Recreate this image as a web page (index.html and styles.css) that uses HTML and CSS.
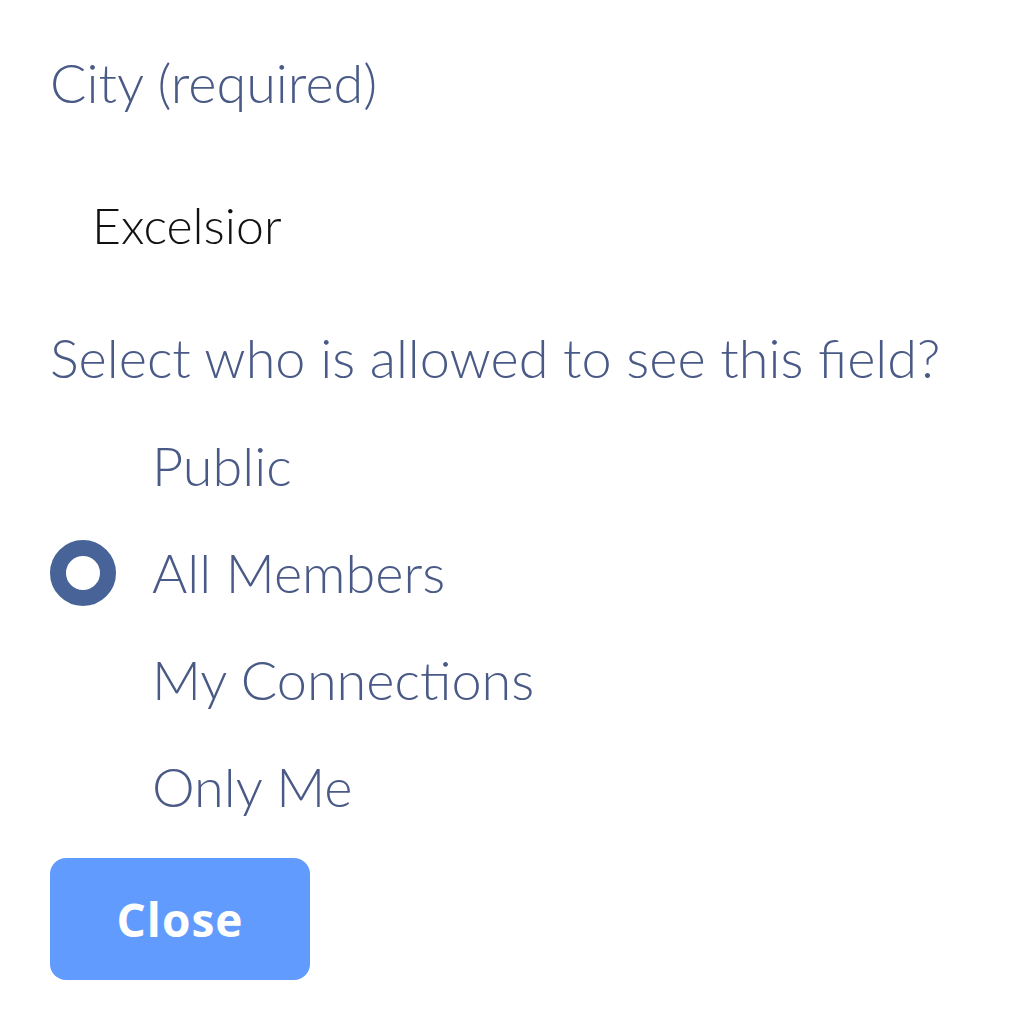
FILE: index.html
```html
<!DOCTYPE html>
<html lang="en">
<head>
  <meta charset="UTF-8" />
  <title>Field visibility</title>
  <link rel="stylesheet" href="styles.css">
</head>
<body>
  <form class="field-form">
    <label class="field-label" for="city">City (required)</label>
    <input class="field-input" id="city" name="city" value="Excelsior" />

    <p class="visibility-title">Select who is allowed to see this field?</p>
    <ul class="visibility-list">
      <li class="visibility-option">
        <span class="radio"></span>
        <span class="option-text">Public</span>
      </li>
      <li class="visibility-option">
        <span class="radio checked"></span>
        <span class="option-text">All Members</span>
      </li>
      <li class="visibility-option">
        <span class="radio"></span>
        <span class="option-text">My Connections</span>
      </li>
      <li class="visibility-option">
        <span class="radio"></span>
        <span class="option-text">Only Me</span>
      </li>
    </ul>

    <button type="button" class="close-btn">Close</button>
  </form>
</body>
</html>
```

FILE: styles.css
```css
* {
  box-sizing: border-box;
  margin: 0;
  padding: 0;
}

body {
  background: #fff;
  font-family: Lato, "Open Sans", sans-serif;
  font-weight: 300;
  color: #4a5a86;
}

.field-form {
  display: flex;
  flex-direction: column;
  align-items: flex-start;
  padding: 48px 0 0 50px;
}

.field-label {
  font-size: 54px;
  line-height: 70px;
  white-space: nowrap;
}

.field-input {
  margin-top: 76px;
  border: none;
  outline: none;
  background: transparent;
  padding-left: 42px;
  width: 600px;
  font-family: inherit;
  font-weight: 300;
  font-size: 50px;
  line-height: 62px;
  height: 62px;
  color: #111;
}

.visibility-title {
  margin-top: 62px;
  font-size: 54px;
  line-height: 80px;
  white-space: nowrap;
}

.visibility-list {
  list-style: none;
  margin-top: 14px;
}

.visibility-option {
  display: flex;
  align-items: center;
  height: 107px;
  gap: 36px;
  font-size: 54px;
  white-space: nowrap;
}

.radio {
  width: 66px;
  height: 66px;
  border-radius: 50%;
  flex-shrink: 0;
}

.radio.checked {
  border: 16px solid #476397;
}

.close-btn {
  margin-top: 18px;
  width: 260px;
  height: 122px;
  border: none;
  border-radius: 16px;
  background: #619bfd;
  color: #fff;
  font-family: "Open Sans", sans-serif;
  font-weight: 700;
  font-size: 46px;
  letter-spacing: 1px;
}
```
